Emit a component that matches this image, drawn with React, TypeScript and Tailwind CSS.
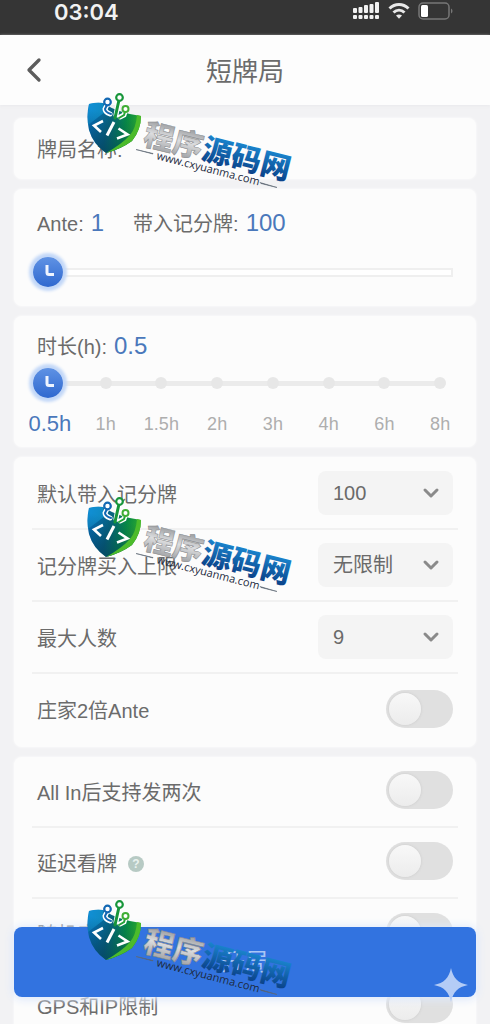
import React, { useState } from 'react';
import { ChevronDown, ChevronLeft } from 'lucide-react';

const DURATIONS = ['0.5', '1', '1.5', '2', '3', '4', '6', '8'];

function StatusBar() {
  return (
    <div className="flex h-[35px] shrink-0 items-start justify-between bg-[#353535] pl-[54px] pr-9 text-white">
      <span className="font-['Inter',sans-serif] text-[22px] leading-6 font-semibold text-[#f2f2f2]">03:04</span>
      <div className="flex items-center gap-2 pt-px">
        {/* Dual sim signal */}
        <svg width="27" height="20" viewBox="0 0 27 20" fill="#f2f2f2" aria-hidden="true">
          <rect x="0" y="7" width="4" height="5" rx="1" />
          <rect x="5.500" y="6" width="4" height="6" rx="1" />
          <rect x="11" y="4" width="4" height="8" rx="1" />
          <rect x="16.500" y="3" width="4" height="9" rx="1" />
          <rect x="22" y="1" width="4" height="11" rx="1" />
          <rect x="0" y="14" width="4" height="4" rx="1" />
          <rect x="5.500" y="14" width="4" height="4" rx="1" />
          <rect x="11" y="14" width="4" height="4" rx="1" />
          <rect x="16.500" y="14" width="4" height="4" rx="1" />
          <rect x="22" y="14" width="4" height="4" rx="1" />
        </svg>
        <svg width="22" height="18" viewBox="0 0 22 18" fill="none" stroke="#e8e8e8" strokeWidth="3" aria-hidden="true">
          <path d="M1.5 6.5C7 1.2 15 1.2 20.500 6.500" />
          <path d="M5.500 10.500C8.800 7.400 13.200 7.400 16.500 10.500" />
          <path d="M8 13.500C9.800 12 12.200 12 14 13.500L11 16.800Z" fill="#e8e8e8" stroke="none" />
        </svg>
        <svg width="36" height="18" viewBox="0 0 36 18" fill="none" aria-hidden="true">
          <rect x="1" y="1" width="30" height="16" rx="4" stroke="#777" strokeWidth="1.500" />
          <rect x="3" y="3" width="7" height="12" rx="1.500" fill="#fff" />
          <path d="M33 6.500C35 7.500 35 10.500 33 11.500Z" fill="#777" />
        </svg>
      </div>
    </div>
  );
}

function Knob() {
  return (
    <span className="flex h-[30px] w-[30px] items-center justify-center rounded-full bg-linear-to-b from-[#5f92e4] to-[#2f68cf] shadow-[0_0_3px_4px_#c3d8f8]">
      <svg width="30" height="30" viewBox="0 0 30 30" fill="none" stroke="#eef4ff" strokeWidth="3" aria-hidden="true">
        <path d="M14 8V15.500Q14 17.500 16 17.500H21" />
      </svg>
    </span>
  );
}

function Card({ className = '', children }: { className?: string; children: React.ReactNode }) {
  return (
    <section className={`rounded-lg bg-[#fcfcfc] shadow-[0_0_3px_#ffffff] ${className}`}>
      {children}
    </section>
  );
}

function SelectRow({ id, label, options }: { id: string; label: string; options: string[] }) {
  return (
    <div className="flex h-[72px] items-center justify-between border-b-2 border-[#f1f1f1] px-[5px]">
      <label htmlFor={id} className="pt-[3px]">{label}</label>
      <div className="relative">
        <select
          id={id}
          className="h-11 w-[135px] appearance-none rounded-lg bg-[#f4f4f4] pl-[15px] text-xl text-[#6a6a6a] outline-none"
        >
          {options.map((option) => (
            <option key={option}>{option}</option>
          ))}
        </select>
        <ChevronDown className="pointer-events-none absolute top-[10px] right-[10px] h-6 w-6 text-[#8a8a8a]" strokeWidth={3} />
      </div>
    </div>
  );
}

interface ToggleRowProps {
  id: string;
  label: string;
  help?: boolean;
  last?: boolean;
  size?: string;
}

function ToggleRow({ id, label, help, last, size = 'h-[71px]' }: ToggleRowProps) {
  return (
    <div className={`flex items-center justify-between px-[5px] pb-[3px] ${size} ${last ? '' : 'border-b-2 border-[#f1f1f1]'}`}>
      <div className="flex items-center gap-[11px] pt-[5px]">
        <label htmlFor={id}>{label}</label>
        {help && (
          <button
            type="button"
            aria-label="说明"
            className="flex h-4 w-4 items-center justify-center rounded-full bg-[#b7cac4] text-xs font-bold text-[#eaf2ef]"
          >
            ?
          </button>
        )}
      </div>
      <label className="relative block cursor-pointer">
        <input id={id} type="checkbox" className="peer sr-only" />
        <span className="block h-[38px] w-[67px] rounded-full bg-[#e0e0e0] peer-checked:bg-[#3273e0]" />
        <span className="absolute top-[3px] left-[3px] h-8 w-8 rounded-full bg-linear-to-b from-[#f8f8f8] to-[#ececec] shadow-[0_0_3px_#c8c8c8] transition-transform peer-checked:translate-x-7" />
      </label>
    </div>
  );
}

function Watermark({ id, className }: { id: string; className: string }) {
  return (
    <svg
      className={`pointer-events-none absolute left-20 z-20 ${className}`}
      width="220"
      height="104"
      viewBox="80 88 220 104"
      fill="none"
    >
      <defs>
        <linearGradient id={`${id}-shield`} x1="88" y1="118" x2="140" y2="132" gradientUnits="userSpaceOnUse">
          <stop offset="0" stopColor="#0874c4" />
          <stop offset="0.4" stopColor="#07637f" />
          <stop offset="0.7" stopColor="#078a45" />
          <stop offset="1" stopColor="#35ad28" />
        </linearGradient>
        <linearGradient id={`${id}-shade`} x1="115" y1="115" x2="106" y2="152" gradientUnits="userSpaceOnUse">
          <stop offset="0" stopColor="#033a5c" stopOpacity="0" />
          <stop offset="1" stopColor="#033a5c" stopOpacity="0.6" />
        </linearGradient>
        <linearGradient id={`${id}-silver`} x1="0" y1="-26" x2="0" y2="4" gradientUnits="userSpaceOnUse">
          <stop offset="0" stopColor="#9b9da0" />
          <stop offset="0.45" stopColor="#dcdddf" />
          <stop offset="1" stopColor="#9fa1a4" />
        </linearGradient>
        <linearGradient id={`${id}-blue`} x1="0" y1="-26" x2="0" y2="4" gradientUnits="userSpaceOnUse">
          <stop offset="0" stopColor="#1a86cf" />
          <stop offset="1" stopColor="#0a3f86" />
        </linearGradient>
      </defs>

      {/* Shield */}
      <path d="M89 104Q96 102 103 103Q118 113 141 116Q141 130 132 141Q121 149 106 153Q93 144 89 130Q86 116 89 104Z" fill={`url(#${id}-shield)`} />
      <path d="M89 104Q96 102 103 103L105 112L88 125Q87 114 89 104Z" fill="#16a0dc" opacity="0.6" />
      <path d="M89 104Q96 102 103 103Q118 113 141 116Q141 130 132 141Q121 149 106 153Q93 144 89 130Q86 116 89 104Z" fill={`url(#${id}-shade)`} />
      <path d="M141 116Q141 130 132 141Q121 149 106 153Q122 144 130 135Q136 128 137 115Z" fill="#4cbb2b" />

      {/* Circuit nodes */}
      <g strokeLinecap="round">
        <path d="M107 105L105 109Q105 112 110 114M119 100L116 115M125 112L124 115L120 117" stroke="#fff" strokeWidth="5" />
        <path d="M107 105L105 109Q105 112 111 114" stroke="#1268b3" strokeWidth="2" />
        <path d="M119 100L115 118" stroke="#17963a" strokeWidth="3" />
        <path d="M125 112L124 115L119 118" stroke="#23a338" strokeWidth="2" />
      </g>
      <circle cx="107.500" cy="102" r="3.300" fill="#fff" stroke="#1268b3" strokeWidth="2.200" />
      <circle cx="119.500" cy="97.500" r="3.300" fill="#fff" stroke="#17963a" strokeWidth="2.200" />
      <circle cx="125.500" cy="109" r="3" fill="#fff" stroke="#3fae35" strokeWidth="2" />

      {/* Code brackets */}
      <path d="M103 121L94 125.500L101 132" stroke="#fff" strokeWidth="2.600" />
      <path d="M114 122L107 135.500" stroke="#fff" strokeWidth="3" />
      <path d="M118.500 128.500L127.500 134.500L117 138.500" stroke="#fff" strokeWidth="2.600" />

      {/* Wordmark */}
      <g transform="translate(142 144) rotate(14)" fontFamily="'Noto Sans CJK SC', sans-serif" fontSize="30" fontWeight="900">
        <text x="0" y="0" fill={`url(#${id}-silver)`} stroke="#85878a" strokeWidth="0.5">程序</text>
        <text x="60" y="0" fill={`url(#${id}-blue)`}>源码网</text>
      </g>
      <g transform="translate(156 159) rotate(14.5)">
        <text x="0" y="0" fill="#1d2a3d" fontFamily="'Open Sans', sans-serif" fontSize="11">www.cxyuanma.com</text>
      </g>
      <path d="M136 149.500L153 154L153 153.500Z M260 182.500L277 187.500L261 183.500Z" fill="#33414f" stroke="#5f6a75" strokeWidth="0.600" />
    </svg>
  );
}

export default function App() {
  const [ante, setAnte] = useState(0);
  const [step, setStep] = useState(0);

  return (
    <div className="relative flex h-dvh flex-col overflow-hidden bg-[#f2f2f4] font-['Liberation_Sans','Noto_Sans_CJK_SC',sans-serif] text-xl text-[#6b6b6b]">
      <StatusBar />

      <header className="grid h-[70px] shrink-0 grid-cols-[48px_1fr_48px] items-center bg-[#fdfdfd] px-2 shadow-[0_1px_3px_#e9e9ec]">
        <button type="button" aria-label="返回" className="flex h-10 items-center pl-1.5">
          <ChevronLeft className="h-10 w-10 text-[#5c5c5c]" strokeWidth={2} />
        </button>
        <h1 className="pt-1 text-center text-[26px] leading-8">短牌局</h1>
      </header>

      <main className="flex flex-1 flex-col gap-[10px] overflow-y-auto px-[14px] pt-[13px] [scrollbar-width:none] *:shrink-0">
        {/* Game name */}
        <Card className="flex h-[61px] items-center px-[23px] pt-[3px]">
          <label htmlFor="game-name" className="shrink-0">牌局名称:</label>
          <input id="game-name" type="text" className="ml-2 min-w-0 flex-1 bg-transparent outline-none" />
        </Card>

        {/* Ante */}
        <Card className="px-[23px] pt-[18px] pb-[18px]">
          <div className="flex items-baseline leading-8">
            <label htmlFor="ante">Ante:</label>
            <span className="ml-[7px] text-2xl leading-8 text-[#4a78bb]">1</span>
            <span className="ml-[29px]">带入记分牌:</span>
            <span className="ml-[7px] text-2xl leading-8 text-[#4a78bb]">100</span>
          </div>
          <div className="relative mt-4 flex h-8 items-center">
            <div className="h-[9px] w-full border-2 border-[#efefef] bg-white" />
            <span className="absolute -ml-1" style={{ left: `${ante * 0.93}%` }}>
              <Knob />
            </span>
            <input
              id="ante"
              type="range"
              min={0}
              max={100}
              value={ante}
              onChange={(e) => setAnte(Number(e.target.value))}
              className="absolute inset-0 w-full cursor-pointer opacity-0"
            />
          </div>
        </Card>

        {/* Duration */}
        <Card className="px-2 pt-[14px] pb-2">
          <div className="flex items-baseline px-[15px] leading-8">
            <label htmlFor="duration">时长(h):</label>
            <span className="ml-[7px] text-2xl leading-8 text-[#4a78bb]">{DURATIONS[step]}</span>
          </div>
          <div className="relative mt-1 h-8">
            <div className="absolute top-[14px] right-7 left-7 h-[5px] bg-[#ebebeb]" />
            <div className="relative grid h-full grid-cols-8 items-center justify-items-center">
              {DURATIONS.map((value, i) => (
                <span key={value} className="flex h-3 w-3 items-center justify-center rounded-full bg-[#e7e7e7]">
                  {i === step && (
                    <span className="-ml-1 shrink-0">
                      <Knob />
                    </span>
                  )}
                </span>
              ))}
            </div>
            <input
              id="duration"
              type="range"
              min={0}
              max={DURATIONS.length - 1}
              value={step}
              onChange={(e) => setStep(Number(e.target.value))}
              className="absolute inset-0 w-full cursor-pointer opacity-0"
            />
          </div>
          <div className="mt-2 grid h-8 grid-cols-8 items-center justify-items-center text-lg text-[#aeaeae]">
            {DURATIONS.map((value, i) => (
              <span key={value} className={i === step ? 'text-[22px] text-[#4a78bb]' : ''}>
                {value}h
              </span>
            ))}
          </div>
        </Card>

        {/* Buy-in and players */}
        <Card className="px-[18px] py-px">
          <SelectRow id="default-buyin" label="默认带入记分牌" options={['100', '200', '500']} />
          <SelectRow id="max-buyin" label="记分牌买入上限" options={['无限制', '1000', '2000']} />
          <SelectRow id="max-players" label="最大人数" options={['9', '8', '6']} />
          <ToggleRow id="double-ante" label="庄家2倍Ante" size="h-[72px]" last />
        </Card>

        {/* Options */}
        <Card className="px-[18px]">
          <ToggleRow id="run-twice" label="All In后支持发两次" />
          <ToggleRow id="delay-look" label="延迟看牌" help />
          <ToggleRow id="random-seat" label="随机座位" />
          <ToggleRow id="gps-ip" label="GPS和IP限制" last />
        </Card>
      </main>

      <button
        type="button"
        className="absolute inset-x-[14px] bottom-[27px] z-10 h-[70px] rounded-lg bg-[#3273e0] text-2xl text-[#a9c6f5] shadow-[0_1px_8px_2px_#dfe9fb]"
      >
        开局
      </button>

      <Watermark id="wm-a" className="top-[88px]" />
      <Watermark id="wm-b" className="top-[492px]" />
      <Watermark id="wm-c" className="top-[895px]" />

      <svg className="pointer-events-none absolute right-[22px] bottom-[22px] z-20" width="34" height="34" viewBox="0 0 34 34" aria-hidden="true">
        <path d="M17 0C19 10 24 15 34 17C24 19 19 24 17 34C15 24 10 19 0 17C10 15 15 10 17 0Z" fill="#b4ccf6" />
      </svg>
    </div>
  );
}
